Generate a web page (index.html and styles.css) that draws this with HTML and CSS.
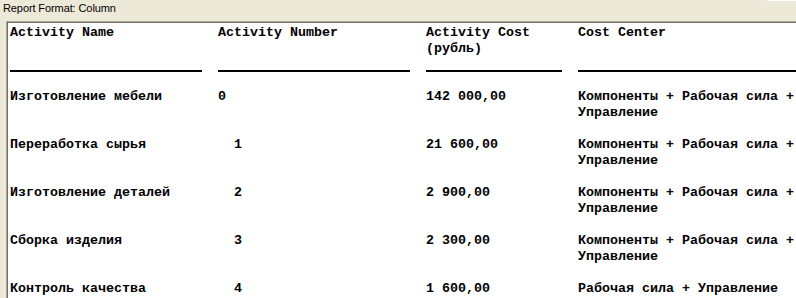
FILE: index.html
```html
<!DOCTYPE html>
<html>
<head>
<meta charset="utf-8">
<link rel="stylesheet" href="styles.css">
</head>
<body>
<div class="page">
  <div class="topbar"><span class="caption">Report Format: Column</span></div>
  <div class="frame">
    <div class="report">
      <div class="hcell">Activity Name</div>
      <div class="hcell">Activity Number</div>
      <div class="hcell">Activity Cost<br>(рубль)</div>
      <div class="hcell">Cost Center</div>

      <div class="cell">Изготовление мебели</div>
      <div class="cell pre">0</div>
      <div class="cell">142 000,00</div>
      <div class="cell">Компоненты + Рабочая сила + Управление</div>

      <div class="cell">Переработка сырья</div>
      <div class="cell pre">  1</div>
      <div class="cell">21 600,00</div>
      <div class="cell">Компоненты + Рабочая сила + Управление</div>

      <div class="cell">Изготовление деталей</div>
      <div class="cell pre">  2</div>
      <div class="cell">2 900,00</div>
      <div class="cell">Компоненты + Рабочая сила + Управление</div>

      <div class="cell">Сборка изделия</div>
      <div class="cell pre">  3</div>
      <div class="cell">2 300,00</div>
      <div class="cell">Компоненты + Рабочая сила + Управление</div>

      <div class="cell">Контроль качества</div>
      <div class="cell pre">  4</div>
      <div class="cell">1 600,00</div>
      <div class="cell">Рабочая сила + Управление</div>
    </div>
  </div>
</div>
</body>
</html>
```
FILE: styles.css
```css
html, body {
  margin: 0;
  padding: 0;
  background: #ece9d8;
  overflow: hidden;
}
.page {
  width: 796px;
  height: 298px;
  display: flex;
  flex-direction: column;
  background: #ece9d8;
}
.topbar {
  height: 21px;
  padding-left: 3px;
  display: flex;
  align-items: flex-start;
  position: relative;
}
.topbar::after {
  content: "";
  position: absolute;
  top: 0;
  left: 767px;
  right: 0;
  height: 1px;
  background: #ffffff;
}
.caption {
  font-family: "Liberation Sans", Arial, sans-serif;
  font-size: 11px;
  line-height: 13px;
  padding-top: 2px;
  letter-spacing: -0.1px;
  color: #000;
}
.frame {
  flex: 1;
  margin-left: 6px;
  border-top: 1px solid #aca899;
  border-left: 1px solid #aca899;
  overflow: hidden;
}
.report {
  height: 100%;
  background: #ffffff;
  border-top: 1px solid #716f64;
  border-left: 1px solid #716f64;
  padding-left: 2px;
  padding-top: 2px;
  display: grid;
  grid-template-columns: 192px 192px 136px 220px;
  column-gap: 16px;
  row-gap: 15px;
  align-content: start;
  font-family: "Liberation Mono", "Courier New", monospace;
  font-weight: bold;
  font-size: 13.333px;
  line-height: 16px;
  color: #000;
}
.hcell {
  height: 45px;
  margin-bottom: 1px;
  border-bottom: 2px solid #000;
  white-space: nowrap;
}
.cell {
  min-height: 16px;
  padding-top: 1px;
}
.pre {
  white-space: pre;
}
```
